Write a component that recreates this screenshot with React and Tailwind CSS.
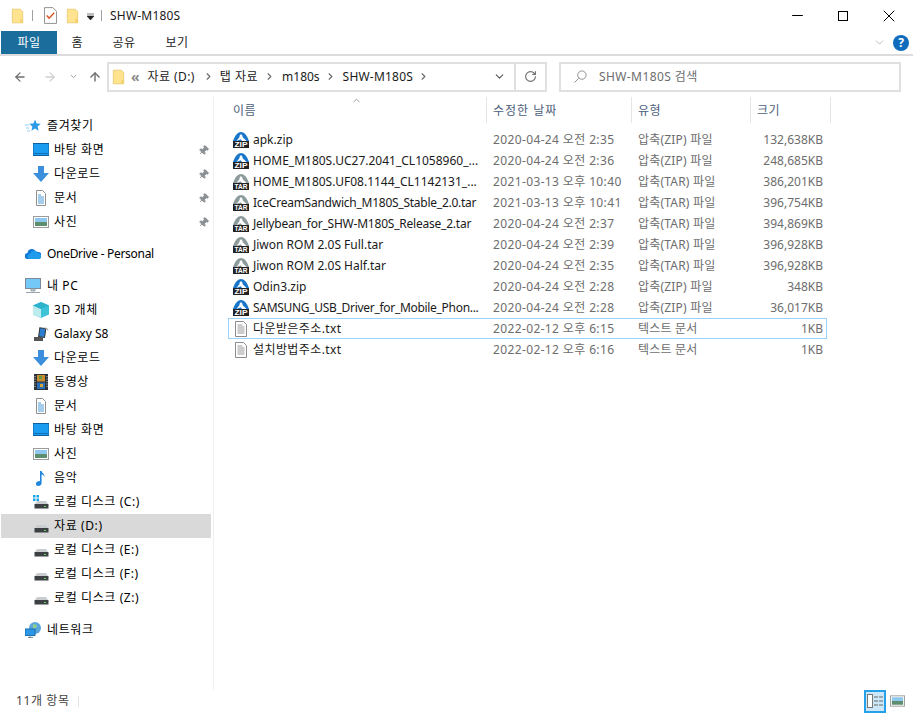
import React from 'react';
import { ChevronDown, ChevronUp, ChevronRight, ArrowLeft, ArrowRight, ArrowUp, RotateCw, Minus, X, Pin } from 'lucide-react';

const font = "font-['Noto_Sans','Noto_Sans_CJK_KR',sans-serif]";

const Folder = ({ className = 'w-4 h-4' }) => (
    <svg viewBox="0 0 16 20" className={className}>
        <path d="M1.5 1.5h10l3 3v14h-13z" fill="#ffe38f" stroke="#e8c766" />
        <path d="M11.5 13.5h3v5h-3z" fill="#f3d06e" />
    </svg>
);

const CheckDoc = () => (
    <svg viewBox="0 0 14 18" className="w-[13px] h-[17px]">
        <path d="M.5.5h9l4 4v13H.5z" fill="#fff" stroke="#8a8a8a" />
        <path d="M3 9l2.5 3L11 6" fill="none" stroke="#d9541e" strokeWidth="1.5" />
    </svg>
);

const Archive = ({ kind }) => {
    const top = kind === 'ZIP' ? '#1a76c9' : '#8d9a9c';
    return (
        <svg viewBox="0 0 16 16" className="w-4 h-4 shrink-0">
            <path d="M0 9C2 3 5 0 8 0s6 3 8 9z" fill={top} />
            <path d="M8 2l2 2.500H9l4.500 4.500H9L7.800 7.200 3.500 9 7 4.500H6z" fill="#fff" />
            <rect y="9" width="16" height="7" fill="#222" />
            <text x="8" y="15" textAnchor="middle" fontSize="6.500" fontWeight="700" fill="#fff" fontFamily="Liberation Sans" textLength="13" lengthAdjust="spacingAndGlyphs">{kind}</text>
        </svg>
    );
};

const TxtIcon = () => (
    <svg viewBox="0 0 16 16" className="w-4 h-4 shrink-0">
        <path d="M2.5.5h8l3 3v12h-11z" fill="#fff" stroke="#8c8c8c" />
        <path d="M4.5 4h5M4.5 6h7M4.5 8h7M4.5 10h7M4.5 12h7" stroke="#9a9a9a" />
    </svg>
);

const Star = () => (
    <svg viewBox="0 0 16 16" className="w-4 h-4 shrink-0">
        <path d="M10 1.5l1.6 4 4.2.3-3.2 2.7 1 4.2-3.6-2.3-3.6 2.3 1-4.2-3.2-2.7 4.2-.3z" fill="#2a9be8" />
        <path d="M0 7h4M1 10h3M2 13h3" stroke="#8fcdf5" />
    </svg>
);

const Desktop = () => (
    <svg viewBox="0 0 16 16" className="w-4 h-4 shrink-0">
        <rect y="1.5" width="16" height="12" fill="#1a9cf0" stroke="#0f5f9e" />
        <path d="M1 11.5h14" stroke="#0f70b8" />
    </svg>
);

const Download = () => (
    <svg viewBox="0 0 16 16" className="w-4 h-4 shrink-0">
        <path d="M5 0h6v7h5l-8 9-8-9h5z" fill="#3b8fdc" />
    </svg>
);

const DocIcon = () => (
    <svg viewBox="0 0 16 16" className="w-4 h-4 shrink-0">
        <path d="M3.5.5h6l3 3v12h-9z" fill="#fff" stroke="#8e8e8e" />
        <path d="M5 5h3M5 7h6M5 9h6M5 11h6M5 13h6" stroke="#4a9ad8" />
    </svg>
);

const Photo = ({ className = 'w-4 h-4 shrink-0' }) => (
    <svg viewBox="0 0 16 14" className={className}>
        <rect x=".5" y="1.5" width="15" height="11" fill="#fff" stroke="#9b9b9b" />
        <rect x="2" y="3" width="12" height="4" fill="#8fc8ee" />
        <rect x="2" y="7" width="12" height="4" fill="#5d8f6e" />
    </svg>
);

const Cloud = () => (
    <svg viewBox="0 0 16 16" className="w-4 h-4 shrink-0">
        <path d="M3 13a3 3 0 0 1-.5-6A4.5 4.5 0 0 1 11 5.500a3.500 3.500 0 0 1 2 .5A3.500 3.500 0 0 1 13 13z" fill="#0f78d4" />
        <path d="M5 13a2.500 2.500 0 0 1 0-5 4 4 0 0 1 7.500-1A3 3 0 0 1 13.500 13z" fill="#1f9ceb" />
    </svg>
);

const Monitor = () => (
    <svg viewBox="0 0 16 16" className="w-4 h-4 shrink-0">
        <rect x=".5" y=".5" width="15" height="10" fill="#73c8f7" stroke="#7b8a96" />
        <path d="M6 11h4v2H6zM1 14.500h14" stroke="#9aa5ad" fill="#c3cbd1" />
    </svg>
);

const Cube = () => (
    <svg viewBox="0 0 16 16" className="w-4 h-4 shrink-0">
        <path d="M8 0l8 3.500v9L8 16l-8-3.500v-9z" fill="#3dc3d8" />
        <path d="M0 3.500L8 7v9l-8-3.500z" fill="#bdecef" />
        <path d="M8 0l8 3.500L8 7 0 3.500z" fill="#2fb2cc" />
    </svg>
);

const Phone = () => (
    <svg viewBox="0 0 16 16" className="w-4 h-4 shrink-0">
        <path d="M6 2h6v9H6z" fill="#2a7fd0" stroke="#333" transform="rotate(8 8 8)" />
        <path d="M11.500 2a3 3 0 0 1 3.500 2.500" fill="none" stroke="#999" />
        <rect x="1" y="11" width="9" height="4" fill="#555" />
    </svg>
);

const Film = () => (
    <svg viewBox="0 0 16 16" className="w-4 h-4 shrink-0">
        <rect x="1" width="14" height="16" fill="#2c3338" />
        <rect x="4" y="1" width="8" height="6.500" fill="#c98b2b" />
        <rect x="6" y="2" width="3" height="3" fill="#5d9b4a" />
        <rect x="4" y="8.500" width="8" height="6.500" fill="#2a6fb5" />
        <rect x="7" y="10" width="3" height="3" fill="#d8a23a" />
        <path d="M2 2v12M14 2v12" stroke="#d5d5d5" strokeDasharray="1 1.500" />
    </svg>
);

const Note = () => (
    <svg viewBox="0 0 16 16" className="w-4 h-4 shrink-0">
        <path d="M7 1h1.600c.3 2.400 3.400 2.800 2.900 6-.4-1.600-1.500-2.400-2.900-2.600V13c0 1.800-1.700 3-3.500 3S3 15 3 13.500 4.500 11 7 11z" fill="#1f86dc" />
    </svg>
);

const Drive = ({ win }) => (
    <svg viewBox="0 0 16 16" className="w-4 h-4 shrink-0">
        <path d="M2 10l2-3h9l2 3z" fill="#c9cdd0" />
        <rect x="1.500" y="10" width="14" height="4.500" fill="#3c4042" />
        <rect x="11" y="12" width="2" height="1" fill="#5ce05c" />
        {win && <path d="M0 1h2.500v2.500H0zM3.500 1H6v2.500H3.500zM0 4.500h2.500V7H0zM3.500 4.500H6V7H3.500z" fill="#19a3e8" />}
    </svg>
);

const Globe = () => (
    <svg viewBox="0 0 16 16" className="w-4 h-4 shrink-0">
        <circle cx="10" cy="6" r="6" fill="#5aa6dc" />
        <path d="M8 2l4 1-1 3-3 1z" fill="#8ecf8e" />
        <rect y="7" width="10" height="6.500" fill="#2b97e6" stroke="#1b6fb0" />
        <path d="M3 15.500h5M5 13.500v2" stroke="#7a8a96" />
    </svg>
);

const NavRow = ({ icon: Icon, iconProps, label, level = 1, pinned, selected, track = 'tracking-[0.6px]', className = '' }) => (
    <div className={`relative ml-px w-[210px] h-6 flex items-center ${level === 0 ? 'pl-6 gap-[6px]' : 'pl-8 gap-[5px]'} ${selected ? 'bg-[#d9d9d9]' : ''} ${className}`}>
        <Icon {...iconProps} />
        <span className={`text-xs text-black whitespace-nowrap ${track}`}>{label}</span>
        {pinned && <Pin size={11} className="absolute left-[197px] top-[7px] rotate-45 text-[#8a8f94] fill-[#8a8f94]" />}
    </div>
);

const files = [
    { kind: 'ZIP', name: 'apk.zip', date: '2020-04-24 오전 2:35', type: '압축(ZIP) 파일', size: '132,638KB' },
    { kind: 'ZIP', name: 'HOME_M180S.UC27.2041_CL1058960_...', date: '2020-04-24 오전 2:36', type: '압축(ZIP) 파일', size: '248,685KB' },
    { kind: 'TAR', name: 'HOME_M180S.UF08.1144_CL1142131_...', date: '2021-03-13 오후 10:40', type: '압축(TAR) 파일', size: '386,201KB' },
    { kind: 'TAR', name: 'IceCreamSandwich_M180S_Stable_2.0.tar', track: 'tracking-[-0.25px]', date: '2021-03-13 오후 10:41', type: '압축(TAR) 파일', size: '396,754KB' },
    { kind: 'TAR', name: 'Jellybean_for_SHW-M180S_Release_2.tar', track: 'tracking-[-0.22px]', date: '2020-04-24 오전 2:37', type: '압축(TAR) 파일', size: '394,869KB' },
    { kind: 'TAR', name: 'Jiwon ROM 2.0S Full.tar', date: '2020-04-24 오전 2:39', type: '압축(TAR) 파일', size: '396,928KB' },
    { kind: 'TAR', name: 'Jiwon ROM 2.0S Half.tar', date: '2020-04-24 오전 2:35', type: '압축(TAR) 파일', size: '396,928KB' },
    { kind: 'ZIP', name: 'Odin3.zip', date: '2020-04-24 오전 2:28', type: '압축(ZIP) 파일', size: '348KB' },
    { kind: 'ZIP', name: 'SAMSUNG_USB_Driver_for_Mobile_Phon...', track: 'tracking-[-0.3px]', date: '2020-04-24 오전 2:28', type: '압축(ZIP) 파일', size: '36,017KB' },
    { kind: 'TXT', name: '다운받은주소.txt', track: 'tracking-[0.4px]', date: '2022-02-12 오후 6:15', type: '텍스트 문서', size: '1KB', selected: true },
    { kind: 'TXT', name: '설치방법주소.txt', track: 'tracking-[0.4px]', date: '2022-02-12 오후 6:16', type: '텍스트 문서', size: '1KB' },
];

const Crumb = ({ children, className = '' }) => (
    <span className={`text-xs text-[#1a1a1a] whitespace-nowrap ${className}`}>{children}</span>
);

const Sep = () => <ChevronRight size={11} strokeWidth={2.5} className="text-[#6b6b6b] shrink-0" />;

export default function App() {
    return (
        <div className={`${font} w-[913px] h-[714px] bg-white overflow-hidden flex flex-col`}>
            {/* Title bar */}
            <div className="h-[31px] flex items-center pl-[11px] shrink-0">
                <Folder className="w-[13px] h-[16px]" />
                <div className="w-px h-[11px] bg-[#a0a0a0] ml-[8px]" />
                <div className="ml-[11px] flex"><CheckDoc /></div>
                <div className="ml-[9px] flex"><Folder className="w-[13px] h-[16px]" /></div>
                <svg viewBox="0 0 8 8" className="w-2 h-2 ml-[8px] mt-[2px]">
                    <path d="M0 1h7M0 3h7l-3.500 4z" stroke="#222" fill="#222" strokeWidth=".6" />
                </svg>
                <div className="w-px h-[11px] bg-[#a0a0a0] ml-[6px]" />
                <span className="ml-[8px] text-xs text-[#1a1a1a] tracking-[0.2px]">SHW-M180S</span>
                <div className="ml-auto flex items-center pr-px">
                    <div className="w-[45px] flex justify-center"><Minus size={17} strokeWidth={1} absoluteStrokeWidth className="text-black" /></div>
                    <div className="w-[46px] flex justify-center"><div className="w-[10px] h-[10px] border border-black" /></div>
                    <div className="w-[46px] flex justify-center"><X size={20} strokeWidth={1} absoluteStrokeWidth className="text-black" /></div>
                </div>
            </div>

            {/* Ribbon tabs */}
            <div className="h-[25px] shrink-0 flex items-start pl-px border-b-2 border-[#dcdcdc]">
                <div className="w-14 h-[23px] bg-[#1b6e9c] text-white text-xs tracking-[0.5px] flex items-center justify-center">파일</div>
                <div className="w-10 h-[23px] text-xs text-[#222] flex items-center justify-center">홈</div>
                <div className="w-[54px] h-[23px] text-xs text-[#222] tracking-[0.5px] flex items-center justify-center">공유</div>
                <div className="w-[52px] h-[23px] text-xs text-[#222] tracking-[0.5px] flex items-center justify-center">보기</div>
                <div className="ml-auto flex items-center gap-[7px] pr-1 h-[23px]">
                    <ChevronDown size={13} strokeWidth={1.2} className="text-[#9a9a9a]" />
                    <div className="w-4 h-4 rounded-full bg-[#0f6cbd] text-white text-[12px] font-bold flex items-center justify-center">?</div>
                </div>
            </div>

            {/* Address row */}
            <div className="h-[41px] shrink-0 flex items-center">
                <ArrowLeft size={14} strokeWidth={2.2} className="ml-[13px] text-[#6e6e6e]" />
                <ArrowRight size={14} strokeWidth={2.2} className="ml-[16px] text-[#d0d0d0]" />
                <ChevronDown size={9} strokeWidth={2.5} className="ml-[12px] text-[#9a9a9a]" />
                <ArrowUp size={14} strokeWidth={2.4} className="ml-[10px] text-[#6e6e6e]" />
                <div className="ml-[5px] w-[440px] h-[30px] border-2 border-[#e0e0e0] flex items-center pl-[3px]">
                    <Folder className="w-[13px] h-[16px] shrink-0" />
                    <span className="ml-[6px] text-sm leading-none font-bold text-[#8a8a8a]">«</span>
                    <Crumb className="ml-[8px] tracking-[0.4px]">자료 (D:)</Crumb>
                    <span className="ml-[8px] flex"><Sep /></span>
                    <Crumb className="ml-[6px] tracking-[0.5px]">탭 자료</Crumb>
                    <span className="ml-[6px] flex"><Sep /></span>
                    <Crumb className="ml-[7px]">m180s</Crumb>
                    <span className="ml-[5px] flex"><Sep /></span>
                    <Crumb className="ml-[7px] tracking-[0.2px]">SHW-M180S</Crumb>
                    <span className="ml-[5px] flex"><Sep /></span>
                    <ChevronDown size={13} strokeWidth={2} className="ml-auto mr-[8px] text-[#555]" />
                    <div className="w-[31px] h-full border-l-2 border-[#e0e0e0] flex items-center justify-center shrink-0">
                        <RotateCw size={13} strokeWidth={2} className="text-[#6e6e6e]" />
                    </div>
                </div>
                <div className="ml-[12px] w-[342px] h-[30px] border-2 border-[#e0e0e0] flex items-center pl-[13px]">
                    <svg viewBox="0 0 14 14" className="w-[13px] h-[13px] shrink-0">
                        <circle cx="8.500" cy="5.500" r="4.500" fill="none" stroke="#8a8a8a" />
                        <path d="M5 9l-4.500 4.500" stroke="#8a8a8a" />
                    </svg>
                    <span className="ml-[12px] text-xs text-[#6d6d6d] tracking-[0.4px]">SHW-M180S 검색</span>
                </div>
            </div>

            {/* Main */}
            <div className="flex flex-1 min-h-0">
                <div className="w-[214px] shrink-0 border-r border-[#efefef] pt-[17px] h-[593px]">
                    <NavRow level={0} icon={Star} label="즐겨찾기" />
                    <NavRow icon={Desktop} label="바탕 화면" pinned />
                    <NavRow icon={Download} label="다운로드" pinned />
                    <NavRow icon={DocIcon} label="문서" pinned />
                    <NavRow icon={Photo} label="사진" pinned />
                    <NavRow level={0} icon={Cloud} label="OneDrive - Personal" track="tracking-[-0.3px]" className="mt-2" />
                    <NavRow level={0} icon={Monitor} label="내 PC" className="mt-2" />
                    <NavRow icon={Cube} label="3D 개체" />
                    <NavRow icon={Phone} label="Galaxy S8" track="tracking-normal" />
                    <NavRow icon={Download} label="다운로드" />
                    <NavRow icon={Film} label="동영상" />
                    <NavRow icon={DocIcon} label="문서" />
                    <NavRow icon={Desktop} label="바탕 화면" />
                    <NavRow icon={Photo} label="사진" />
                    <NavRow icon={Note} label="음악" />
                    <NavRow icon={Drive} iconProps={{ win: true }} label="로컬 디스크 (C:)" />
                    <NavRow icon={Drive} label="자료 (D:)" selected />
                    <NavRow icon={Drive} label="로컬 디스크 (E:)" />
                    <NavRow icon={Drive} label="로컬 디스크 (F:)" />
                    <NavRow icon={Drive} label="로컬 디스크 (Z:)" />
                    <NavRow level={0} icon={Globe} label="네트워크" className="mt-2" />
                </div>

                <div className="ml-[14px] flex-1 min-w-0">
                    <div className="relative h-[26px] flex text-xs text-[#4c607a] mb-[6px] tracking-[0.5px]">
                        <ChevronUp size={11} strokeWidth={1.5} className="absolute left-[123px] -top-[2px] text-[#777]" />
                        <div className="w-[259px] pl-[5px] pt-[2px] flex items-center border-r border-[#e5e5e5]">이름</div>
                        <div className="w-[145px] pl-[6px] pt-[2px] flex items-center border-r border-[#e5e5e5] tracking-[1px]">수정한 날짜</div>
                        <div className="w-[119px] pl-[6px] pt-[2px] flex items-center border-r border-[#e5e5e5]">유형</div>
                        <div className="w-[80px] pl-[6px] pt-[2px] flex items-center border-r border-[#e5e5e5]">크기</div>
                    </div>
                    {files.map((file) => (
                        <div key={file.name} className={`w-[599px] h-[21px] flex items-center text-xs ${file.selected ? 'border border-[#99d1ff]' : 'border border-transparent'}`}>
                            <div className="w-[258px] pl-1 flex items-center gap-1 text-[#1a1a1a] whitespace-nowrap">
                                {file.kind === 'TXT' ? <TxtIcon /> : <Archive kind={file.kind} />}
                                <span className={file.track}>{file.name}</span>
                            </div>
                            <div className="w-[145px] pl-[6px] text-[#6d6d6d] whitespace-nowrap tracking-[0.37px]">{file.date}</div>
                            <div className="w-[119px] pl-[6px] text-[#6d6d6d] whitespace-nowrap tracking-[0.2px]">{file.type}</div>
                            <div className="w-[74px] pr-[2px] text-right text-[#6d6d6d] whitespace-nowrap">{file.size}</div>
                        </div>
                    ))}
                </div>
            </div>

            {/* Status bar */}
            <div className="h-6 shrink-0 flex items-center pl-4 mb-px">
                <span className="text-xs text-[#444] tracking-[0.6px]">11개 항목</span>
                <div className="ml-[8px] w-px h-[11px] bg-[#e5e5e5]" />
                <div className="ml-auto flex items-center pr-[8px] gap-[4px]">
                    <div className="w-[22px] h-[23px] bg-[#cce8f8] border-2 border-[#26a0e8] flex items-center justify-center">
                        <svg viewBox="0 0 16 14" className="w-4 h-[14px]">
                            <rect x=".5" y=".5" width="5" height="13" fill="#fff" stroke="#777" />
                            <path d="M7 3h4M12 3h4M7 7h4M12 7h4M7 11h4M12 11h4" stroke="#666" />
                        </svg>
                    </div>
                    <Photo className="w-[15px] h-[14px]" />
                </div>
            </div>
        </div>
    );
}
